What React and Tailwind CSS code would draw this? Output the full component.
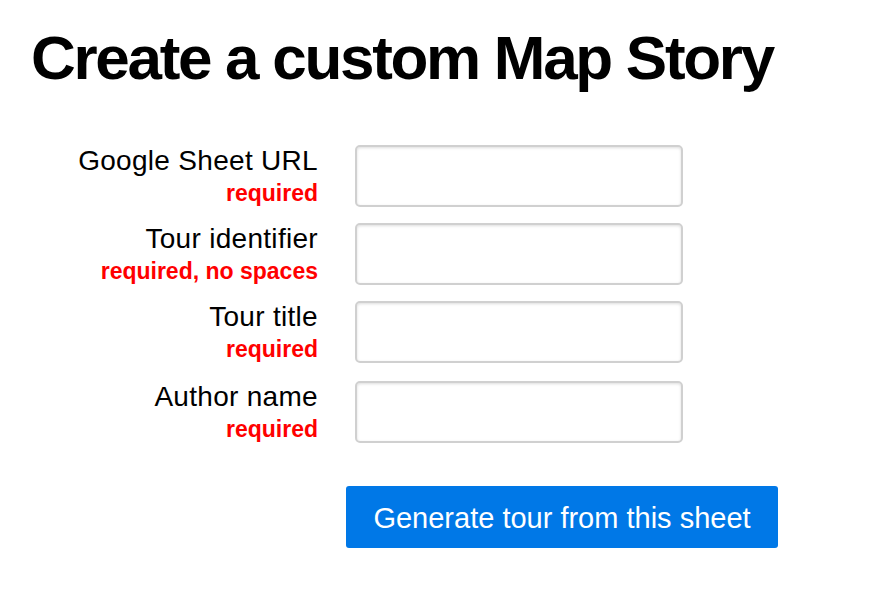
export default function App() {
	const fields = [
		{ label: "Google Sheet URL", hint: "required", mt: "mt-0" },
		{ label: "Tour identifier", hint: "required, no spaces", mt: "mt-4" },
		{ label: "Tour title", hint: "required", mt: "mt-4" },
		{ label: "Author name", hint: "required", mt: "mt-[18px]" },
	];

	return (
		<div className="w-[892px] h-[604px] bg-white text-black font-['Liberation_Sans',Arial,sans-serif]">
			<h1 className="pl-[31px] pt-[22px] text-[62px] leading-[72px] font-bold tracking-[-2.3px]">
				Create a custom Map Story
			</h1>
			<form className="mt-[51px] flex flex-col">
				{fields.map((f) => (
					<div key={f.label} className={`flex flex-row items-start ${f.mt}`}>
						<div className="w-[318px] text-right flex flex-col">
							<label className="text-[28px] leading-[32px] tracking-[0.3px]">{f.label}</label>
							<span className="text-[23px] leading-[28px] font-bold text-[#ff0000] mt-[2px]">
								{f.hint}
							</span>
						</div>
						<input
							type="text"
							className="ml-[37px] w-[328px] h-[62px] border-2 border-[#d0d0d0] rounded-[5px] shadow-[inset_0_1px_3px_#ddd] bg-white"
						/>
					</div>
				))}
				<div className="mt-[43px] pl-[346px]">
					<button
						type="button"
						className="w-[432px] h-[62px] pt-[3px] bg-[#0078e7] text-white text-[29px] rounded-[3px]"
					>
						Generate tour from this sheet
					</button>
				</div>
			</form>
		</div>
	);
}
